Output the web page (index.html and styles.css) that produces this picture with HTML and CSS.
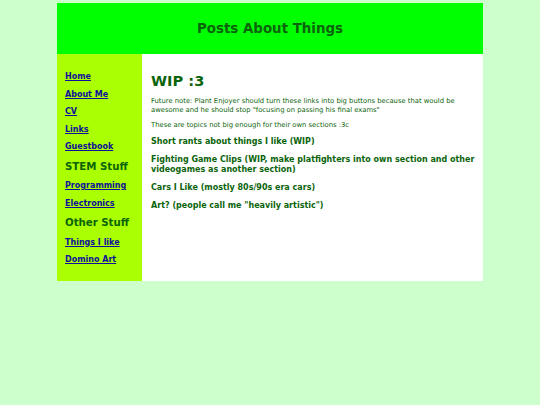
FILE: index.html
```html
<!DOCTYPE html>
<html>
<head>
<meta charset="utf-8">
<link rel="stylesheet" href="styles.css">
<title>Posts About Things</title>
</head>
<body>
<div class="page">
  <header class="banner">
    <h1 class="title">Posts About Things</h1>
  </header>
  <div class="main">
    <nav class="sidebar">
      <a class="navlink" href="#">Home</a>
      <a class="navlink" href="#">About Me</a>
      <a class="navlink" href="#">CV</a>
      <a class="navlink" href="#">Links</a>
      <a class="navlink" href="#">Guestbook</a>
      <h3 class="navhead">STEM Stuff</h3>
      <a class="navlink" href="#">Programming</a>
      <a class="navlink" href="#">Electronics</a>
      <h3 class="navhead">Other Stuff</h3>
      <a class="navlink" href="#">Things I like</a>
      <a class="navlink" href="#">Domino Art</a>
    </nav>
    <section class="content">
      <h2 class="heading">WIP :3</h2>
      <p class="note note-first">Future note: Plant Enjoyer should turn these links into big buttons because that would be awesome and he should stop "focusing on passing his final exams"</p>
      <p class="note note-second">These are topics not big enough for their own sections :3c</p>
      <h4 class="topic topic-first">Short rants about things I like (WIP)</h4>
      <h4 class="topic">Fighting Game Clips (WIP, make platfighters into own section and other videogames as another section)</h4>
      <h4 class="topic">Cars I Like (mostly 80s/90s era cars)</h4>
      <h4 class="topic">Art? (people call me "heavily artistic")</h4>
    </section>
  </div>
</div>
</body>
</html>
```
FILE: styles.css
```css
html, body {
  margin: 0;
  padding: 0;
}
body {
  background: #ccffcc;
  font-family: "DejaVu Sans", Verdana, sans-serif;
  color: #0b640b;
}
.page {
  width: 426px;
  margin: 3px 0 0 57px;
}
.banner {
  background: #00ff00;
  height: 51px;
  display: flex;
  align-items: center;
  justify-content: center;
}
.title {
  margin: 0;
  font-size: 13.4px;
  line-height: 16px;
  font-weight: bold;
  color: #0b640b;
  padding-top: 1px;
}
.main {
  display: flex;
}
.sidebar {
  width: 77px;
  flex: none;
  background: #aaff00;
  padding: 18px 0 16px 8px;
  display: flex;
  flex-direction: column;
  align-items: flex-start;
  gap: 7.5px;
}
.navlink {
  font-size: 8px;
  line-height: 10px;
  font-weight: bold;
  color: #10109a;
  text-decoration: underline;
}
.navhead {
  margin: 0 0 1px 0;
  font-size: 10.2px;
  line-height: 13px;
  font-weight: bold;
  color: #0b640b;
}
.content {
  flex: 1;
  background: #ffffff;
  padding: 18px 5px 0 9px;
}
.heading {
  margin: 0;
  font-size: 14.6px;
  line-height: 18px;
  font-weight: bold;
}
.note {
  margin: 0;
  font-size: 6.8px;
  line-height: 9px;
}
.note-first {
  margin-top: 7px;
}
.note-second {
  margin-top: 6px;
}
.topic {
  margin: 8px 0 0 0;
  font-size: 8px;
  line-height: 10px;
  font-weight: bold;
}
.topic-first {
  margin-top: 6.5px;
}
```
